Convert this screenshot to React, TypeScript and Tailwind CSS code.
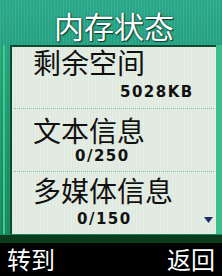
const CJK = "font-['Noto_Sans_CJK_SC','Noto_Sans',sans-serif]";
const NUM = "font-['DejaVu_Sans',sans-serif] font-bold text-[15px] leading-[15px] tracking-[1.5px] text-[#111]";
const LABEL = `h-[28px] leading-[28px] text-[28px] pl-[19px] text-[#111] ${CJK}`;

function DownArrow() {
  return (
    <svg width="9" height="6" viewBox="0 0 9 6" className="ml-auto mr-[1px]">
      <path d="M0 0h9L4.5 6z" fill="#1b2d6b" />
    </svg>
  );
}

export default function App() {
  return (
    <div className="w-[222px] h-[276px] overflow-hidden bg-black flex flex-col">
      <div className="flex-1 flex flex-col bg-[repeating-linear-gradient(90deg,rgba(255,255,255,0.08)_0px,rgba(255,255,255,0.08)_1px,transparent_1px,transparent_3px),linear-gradient(180deg,#2aa88a_0%,#1d9a78_40%,#14845f_100%)]">
        <div className={`h-[45px] flex items-center justify-center pt-[4px] pl-[6px] text-white text-[30px] leading-[30px] ${CJK} [text-shadow:0_0_2px_#0b3b2b,1px_1px_1px_#0b3b2b]`}>
          内存状态
        </div>
        <div className="flex flex-1 pb-[1px]">
          <div className="w-[10px] flex justify-start pl-[3px]">
            <div className="w-[2px] bg-[#3fd07a]" />
          </div>
          <div className="flex-1 flex flex-col bg-[repeating-linear-gradient(90deg,rgba(0,0,0,0.025)_0px,rgba(0,0,0,0.025)_1px,transparent_1px,transparent_3px)] bg-[#e4ede3] border-t-2 border-l-2 border-[#0e4a30] px-[2px]">
            <div className="flex flex-col h-[62px] border-b border-dotted border-[#7cc48e]">
              <div className={`mt-[1px] ${LABEL}`}>剩余空间</div>
              <div className={`mt-[9px] pl-[106px] ${NUM}`}>5028KB</div>
            </div>
            <div className="flex flex-col h-[63px] border-b border-dotted border-[#7cc48e]">
              <div className={`mt-[7px] ${LABEL}`}>文本信息</div>
              <div className={`mt-[5px] pl-[61px] ${NUM}`}>0/250</div>
            </div>
            <div className="flex flex-col flex-1">
              <div className={`mt-[4px] ${LABEL}`}>多媒体信息</div>
              <div className={`mt-[8px] pl-[63px] flex items-center ${NUM}`}>
                0/150
                <DownArrow />
              </div>
            </div>
          </div>
          <div className="w-[6px] bg-[#3dbf8a]" />
        </div>
      </div>
      <div className="h-[8px] bg-[#0b3a1c]" />
      <div className={`h-[33px] flex items-center justify-between px-[7px] pb-[2px] text-white text-[24px] leading-[24px] ${CJK}`}>
        <span>转到</span>
        <span>返回</span>
      </div>
    </div>
  );
}
